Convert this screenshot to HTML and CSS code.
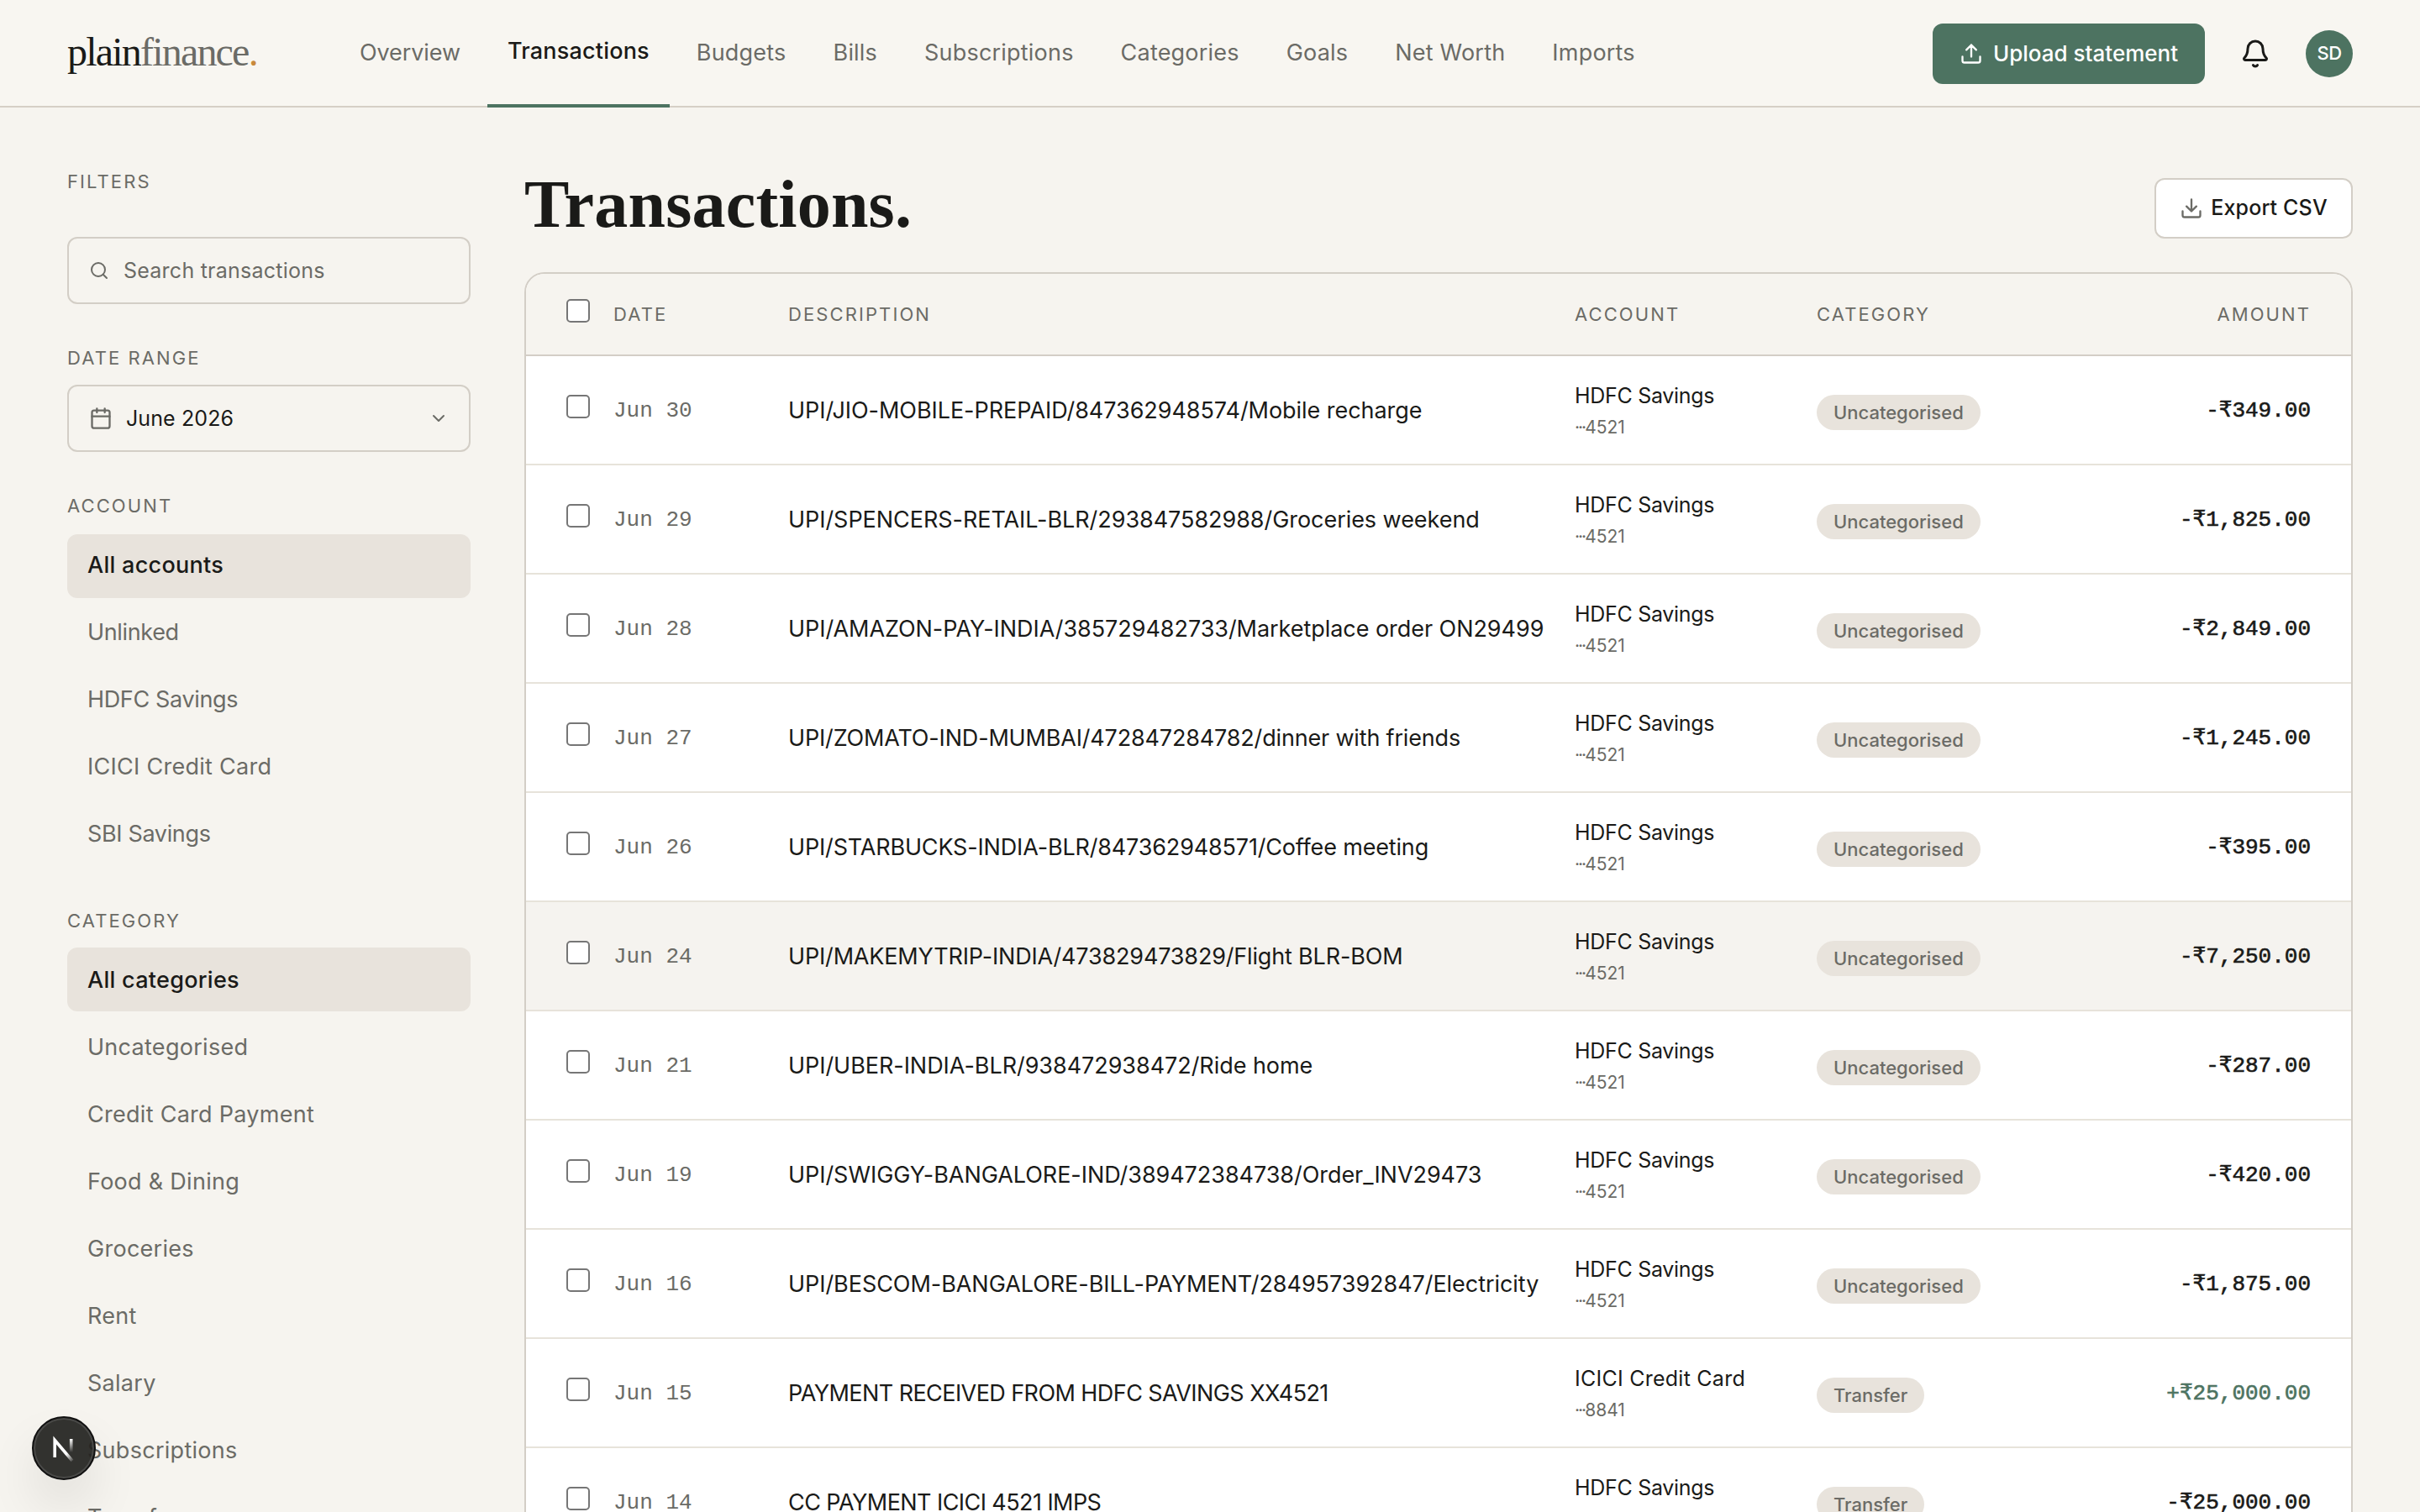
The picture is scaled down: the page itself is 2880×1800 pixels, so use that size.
FILE: index.html
```html
<!DOCTYPE html>
<html lang="en">
<head>
    <meta charset="UTF-8">
    <meta name="viewport" content="width=device-width, initial-scale=1.0">
    <title>plainfinance. - Transactions</title>
    <link rel="stylesheet" href="styles.css">
</head>
<body>
    <header class="topbar">
        <a class="logo">plain<span class="logo-soft">finance</span><span class="logo-dot">.</span></a>
        <nav class="nav">
            <a class="nav-link first">Overview</a>
            <a class="nav-link active">Transactions</a>
            <a class="nav-link">Budgets</a>
            <a class="nav-link">Bills</a>
            <a class="nav-link">Subscriptions</a>
            <a class="nav-link">Categories</a>
            <a class="nav-link">Goals</a>
            <a class="nav-link">Net Worth</a>
            <a class="nav-link">Imports</a>
        </nav>
        <div class="actions">
            <button class="upload">
                <svg class="icon-upload" viewBox="0 0 24 24"><path d="M21 15v4a2 2 0 0 1-2 2H5a2 2 0 0 1-2-2v-4M17 8l-5-5-5 5M12 3v12"/></svg>
                <span>Upload statement</span>
            </button>
            <button class="bell">
                <svg class="icon-bell" viewBox="0 0 24 24"><path d="M10.27 21a2 2 0 0 0 3.46 0M3.26 15.33A1 1 0 0 0 4 17h16a1 1 0 0 0 .74-1.67C19.41 13.96 18 12.5 18 8A6 6 0 0 0 6 8c0 4.5-1.41 5.96-2.74 7.33"/></svg>
            </button>
            <span class="avatar">SD</span>
        </div>
    </header>

    <div class="page">
        <aside class="sidebar">
            <h2 class="label label-filters">Filters</h2>
            <div class="field search">
                <svg class="icon-search" viewBox="0 0 24 24"><circle cx="11" cy="11" r="8"/><path d="m21 21-4.3-4.3"/></svg>
                <span>Search transactions</span>
            </div>

            <h2 class="label label-date">Date range</h2>
            <div class="field month">
                <svg class="icon-calendar" viewBox="0 0 24 24"><rect x="3" y="4" width="18" height="18" rx="2"/><path d="M8 2v4M16 2v4M3 10h18"/></svg>
                <span>June 2026</span>
                <svg class="icon-chevron" viewBox="0 0 24 24"><path d="m6 9 6 6 6-6"/></svg>
            </div>

            <h2 class="label label-account">Account</h2>
            <ul class="filter-list">
                <li class="selected">All accounts</li>
                <li class="tight">Unlinked</li>
                <li class="tight">HDFC Savings</li>
                <li>ICICI Credit Card</li>
                <li class="tight">SBI Savings</li>
            </ul>

            <h2 class="label label-category">Category</h2>
            <ul class="filter-list categories">
                <li class="selected">All categories</li>
                <li>Uncategorised</li>
                <li>Credit Card Payment</li>
                <li>Food &amp; Dining</li>
                <li>Groceries</li>
                <li>Rent</li>
                <li>Salary</li>
                <li>Subscriptions</li>
                <li>Transfer</li>
            </ul>
        </aside>

        <main class="main">
            <div class="heading">
                <h1>Transactions.</h1>
                <button class="export">
                    <svg class="icon-download" viewBox="0 0 24 24"><path d="M21 15v4a2 2 0 0 1-2 2H5a2 2 0 0 1-2-2v-4M7 10l5 5 5-5M12 15V3"/></svg>
                    <span>Export CSV</span>
                </button>
            </div>

            <div class="card">
                <table class="transactions">
                    <colgroup>
                        <col class="col-check"><col class="col-date"><col class="col-desc">
                        <col class="col-account"><col class="col-category"><col class="col-amount">
                    </colgroup>
                    <thead>
                        <tr>
                            <th class="check"><span class="box"></span></th>
                            <th>Date</th>
                            <th>Description</th>
                            <th>Account</th>
                            <th>Category</th>
                            <th class="right">Amount</th>
                        </tr>
                    </thead>
                    <tbody>
                        <tr>
                            <td class="check"><span class="box"></span></td>
                            <td class="date">Jun 30</td>
                            <td class="desc">UPI/JIO-MOBILE-PREPAID/847362948574/Mobile recharge</td>
                            <td class="account">HDFC Savings<small><i>···</i>4521</small></td>
                            <td class="category"><span class="pill">Uncategorised</span></td>
                            <td class="amount">-₹349.00</td>
                        </tr>
                        <tr>
                            <td class="check"><span class="box"></span></td>
                            <td class="date">Jun 29</td>
                            <td class="desc">UPI/SPENCERS-RETAIL-BLR/293847582988/Groceries weekend</td>
                            <td class="account">HDFC Savings<small><i>···</i>4521</small></td>
                            <td class="category"><span class="pill">Uncategorised</span></td>
                            <td class="amount">-₹1,825.00</td>
                        </tr>
                        <tr>
                            <td class="check"><span class="box"></span></td>
                            <td class="date">Jun 28</td>
                            <td class="desc">UPI/AMAZON-PAY-INDIA/385729482733/Marketplace order ON29499</td>
                            <td class="account">HDFC Savings<small><i>···</i>4521</small></td>
                            <td class="category"><span class="pill">Uncategorised</span></td>
                            <td class="amount">-₹2,849.00</td>
                        </tr>
                        <tr>
                            <td class="check"><span class="box"></span></td>
                            <td class="date">Jun 27</td>
                            <td class="desc snug">UPI/ZOMATO-IND-MUMBAI/472847284782/dinner with friends</td>
                            <td class="account">HDFC Savings<small><i>···</i>4521</small></td>
                            <td class="category"><span class="pill">Uncategorised</span></td>
                            <td class="amount">-₹1,245.00</td>
                        </tr>
                        <tr>
                            <td class="check"><span class="box"></span></td>
                            <td class="date">Jun 26</td>
                            <td class="desc snug">UPI/STARBUCKS-INDIA-BLR/847362948571/Coffee meeting</td>
                            <td class="account">HDFC Savings<small><i>···</i>4521</small></td>
                            <td class="category"><span class="pill">Uncategorised</span></td>
                            <td class="amount">-₹395.00</td>
                        </tr>
                        <tr class="hovered">
                            <td class="check"><span class="box"></span></td>
                            <td class="date">Jun 24</td>
                            <td class="desc snug">UPI/MAKEMYTRIP-INDIA/473829473829/Flight BLR-BOM</td>
                            <td class="account">HDFC Savings<small><i>···</i>4521</small></td>
                            <td class="category"><span class="pill">Uncategorised</span></td>
                            <td class="amount">-₹7,250.00</td>
                        </tr>
                        <tr>
                            <td class="check"><span class="box"></span></td>
                            <td class="date">Jun 21</td>
                            <td class="desc">UPI/UBER-INDIA-BLR/938472938472/Ride home</td>
                            <td class="account">HDFC Savings<small><i>···</i>4521</small></td>
                            <td class="category"><span class="pill">Uncategorised</span></td>
                            <td class="amount">-₹287.00</td>
                        </tr>
                        <tr>
                            <td class="check"><span class="box"></span></td>
                            <td class="date">Jun 19</td>
                            <td class="desc">UPI/SWIGGY-BANGALORE-IND/389472384738/Order_INV29473</td>
                            <td class="account">HDFC Savings<small><i>···</i>4521</small></td>
                            <td class="category"><span class="pill">Uncategorised</span></td>
                            <td class="amount">-₹420.00</td>
                        </tr>
                        <tr>
                            <td class="check"><span class="box"></span></td>
                            <td class="date">Jun 16</td>
                            <td class="desc">UPI/BESCOM-BANGALORE-BILL-PAYMENT/284957392847/Electricity</td>
                            <td class="account">HDFC Savings<small><i>···</i>4521</small></td>
                            <td class="category"><span class="pill">Uncategorised</span></td>
                            <td class="amount">-₹1,875.00</td>
                        </tr>
                        <tr>
                            <td class="check"><span class="box"></span></td>
                            <td class="date">Jun 15</td>
                            <td class="desc caps">PAYMENT RECEIVED FROM HDFC SAVINGS XX4521</td>
                            <td class="account credit-card">ICICI Credit Card<small><i>···</i>8841</small></td>
                            <td class="category"><span class="pill">Transfer</span></td>
                            <td class="amount credit">+₹25,000.00</td>
                        </tr>
                        <tr>
                            <td class="check"><span class="box"></span></td>
                            <td class="date">Jun 14</td>
                            <td class="desc caps">CC PAYMENT ICICI 4521 IMPS</td>
                            <td class="account">HDFC Savings<small><i>···</i>4521</small></td>
                            <td class="category"><span class="pill">Transfer</span></td>
                            <td class="amount">-₹25,000.00</td>
                        </tr>
                    </tbody>
                </table>
            </div>
        </main>
    </div>

    <div class="dev-badge">
        <svg viewBox="0 0 76 76">
            <defs>
                <linearGradient id="fade-a" gradientUnits="userSpaceOnUse" x1="38" y1="40" x2="50" y2="54">
                    <stop offset="0.3" stop-color="#fff"/><stop offset="1" stop-color="#fff" stop-opacity="0"/>
                </linearGradient>
                <linearGradient id="fade-b" gradientUnits="userSpaceOnUse" x1="47" y1="27" x2="47" y2="43">
                    <stop offset="0" stop-color="#fff"/><stop offset="1" stop-color="#fff" stop-opacity="0"/>
                </linearGradient>
            </defs>
            <path d="M27.2 49V28.5L48 53" stroke="url(#fade-a)"/>
            <path d="M46.7 27v16" stroke="url(#fade-b)"/>
        </svg>
    </div>
</body>
</html>
```

FILE: styles.css
```css
* {
    box-sizing: border-box;
}

body {
    margin: 0;
    height: 1800px;
    overflow: hidden;
    background: #f6f4ef;
    color: #1a1a18;
    font-family: Inter, 'Liberation Sans', sans-serif;
    font-size: 27px;
}

h1, h2, ul {
    margin: 0;
    padding: 0;
}

button {
    font: inherit;
    border: none;
    background: none;
    padding: 0;
}

svg {
    fill: none;
    stroke: currentColor;
    stroke-width: 2;
    stroke-linecap: round;
    stroke-linejoin: round;
    flex: none;
}

/* top bar */

.topbar {
    display: flex;
    height: 128px;
    padding: 0 80px;
    background: #f8f6f1;
    border-bottom: 2px solid #d6cfc6;
}

.logo {
    width: 324px;
    font-family: 'Liberation Serif', serif;
    font-size: 48px;
    line-height: 124px;
    letter-spacing: -1.8px;
}

.logo-soft {
    color: #6b6b66;
}

.logo-dot {
    color: #c98a3c;
}

.nav {
    display: flex;
    gap: 8px;
    height: 128px;
}

.nav-link {
    padding: 0 24px;
    line-height: 126px;
    letter-spacing: 0.2px;
    color: #6b6b66;
    white-space: nowrap;
}

.nav-link.first {
    letter-spacing: -0.1px;
}

.nav-link.active {
    color: #1a1a18;
    font-weight: 500;
    line-height: 122px;
    border-bottom: 4px solid #4d7361;
}

.actions {
    display: flex;
    align-items: center;
    margin-left: auto;
    height: 128px;
}

.upload {
    display: flex;
    align-items: center;
    justify-content: center;
    gap: 12px;
    width: 324px;
    height: 72px;
    border-radius: 12px;
    background: #4d7361;
    color: #fff;
    font-size: 26px;
    font-weight: 500;
}

.upload span, .export span {
    padding-bottom: 2px;
}

.icon-upload {
    width: 28px;
    height: 28px;
}

.bell {
    display: flex;
    justify-content: center;
    width: 80px;
    margin: 0 20px;
    color: #1a1a18;
}

.icon-bell {
    width: 36px;
    height: 36px;
}

.avatar {
    width: 56px;
    border-radius: 50%;
    background: #4d7361;
    color: #fff;
    font-size: 22px;
    font-weight: 500;
    line-height: 54px;
    letter-spacing: -0.6px;
    height: 56px;
    text-align: center;
}

/* layout */

.page {
    display: flex;
    gap: 64px;
    padding: 64px 80px 0;
}

/* sidebar */

.sidebar {
    width: 480px;
    flex: none;
}

.label {
    font-size: 22px;
    font-weight: 400;
    line-height: 33px;
    letter-spacing: 2.1px;
    text-transform: uppercase;
    color: #6b6b66;
}

.label-filters {
    padding-top: 8px;
    margin-bottom: 49px;
}

.label-date {
    margin: 48px 0 15px;
}

.label-account {
    margin: 48px 0 17px;
}

.label-category {
    margin: 48px 0 15px;
}

.field {
    display: flex;
    align-items: center;
    height: 80px;
    padding: 0 24px;
    border: 2px solid #d3cec6;
    border-radius: 12px;
    font-size: 25px;
    letter-spacing: 0.24px;
}

.search {
    gap: 17px;
    color: #6b6b66;
}

.icon-search {
    width: 24px;
    height: 24px;
}

.month {
    gap: 16px;
    letter-spacing: 0.1px;
}

.icon-calendar {
    width: 28px;
    height: 28px;
    color: #6b6b66;
}

.icon-chevron {
    width: 24px;
    height: 24px;
    margin-left: auto;
    color: #6b6b66;
}

.filter-list {
    display: flex;
    flex-direction: column;
    gap: 4px;
    list-style: none;
}

.filter-list li {
    height: 76px;
    padding-left: 24px;
    border-radius: 12px;
    line-height: 74px;
    letter-spacing: 0.28px;
    color: #6b6b66;
}

.filter-list .tight {
    letter-spacing: -0.35px;
}

.categories li {
    line-height: 77px;
}

.filter-list .selected {
    background: #e8e3dc;
    color: #1a1a18;
    font-weight: 500;
}

/* main column */

.main {
    flex: 1;
}

.heading {
    display: flex;
    justify-content: space-between;
    height: 132px;
    padding-top: 20px;
}

.heading h1 {
    font-family: 'Liberation Serif', serif;
    font-size: 80px;
    font-weight: 700;
    line-height: 62px;
    letter-spacing: 0.2px;
}

.export {
    display: flex;
    align-items: center;
    justify-content: center;
    gap: 9px;
    width: 236px;
    height: 72px;
    border: 2px solid #d3cec6;
    border-radius: 12px;
    background: #fff;
    color: #1a1a18;
    font-size: 25px;
    font-weight: 500;
    letter-spacing: 0.15px;
}

.icon-download {
    width: 28px;
    height: 28px;
    color: #6b6b66;
}

.card {
    border: 2px solid #d3cec6;
    border-radius: 24px 24px 0 0;
    background: #fff;
    overflow: hidden;
}

.transactions {
    width: 100%;
    table-layout: fixed;
    border-collapse: separate;
    border-spacing: 0;
}

.col-check { width: 104px; }
.col-date { width: 208px; }
.col-desc { width: 936px; }
.col-account { width: 288px; }
.col-category { width: 288px; }

.transactions th {
    height: 98px;
    padding: 0;
    border-bottom: 2px solid #d3cec6;
    background: #f6f4ef;
    font-size: 22px;
    font-weight: 400;
    letter-spacing: 2.1px;
    text-align: left;
    text-transform: uppercase;
    color: #6b6b66;
}

.transactions td {
    height: 130px;
    padding: 0;
    border-bottom: 2px solid #e7e3da;
    white-space: nowrap;
}

.transactions .hovered td {
    background: #f5f3ef;
}

.transactions .check {
    padding: 0 0 8px 48px;
}

.box {
    display: block;
    width: 28px;
    height: 28px;
    border: 2px solid #767676;
    border-radius: 5px;
    background: #fff;
}

.transactions .right {
    text-align: right;
    padding-right: 48px;
}

.transactions .date {
    padding-top: 2px;
    font-family: 'Liberation Mono', monospace;
    font-size: 26px;
    color: #6b6b66;
}

.desc {
    letter-spacing: -0.05px;
}

.desc.snug {
    letter-spacing: -0.17px;
}

.desc.caps {
    letter-spacing: -0.57px;
}

.account {
    font-size: 25px;
    line-height: 42px;
    letter-spacing: -0.3px;
}

.account.credit-card {
    letter-spacing: 0.25px;
}

.account small {
    display: block;
    font-size: 21px;
    line-height: 34px;
    letter-spacing: 0;
    color: #6b6b66;
}

.account small i {
    font-style: normal;
    letter-spacing: -2px;
}

.transactions .category {
    padding-top: 6px;
}

.pill {
    display: block;
    width: fit-content;
    height: 42px;
    padding: 0 20px;
    border-radius: 21px;
    background: #e8e3dc;
    color: #6b6b66;
    font-size: 22px;
    font-weight: 500;
    line-height: 42px;
}

.transactions .amount {
    padding: 0 48px 0 0;
    font-family: 'Liberation Mono', monospace;
    font-size: 26px;
    text-align: right;
    -webkit-text-stroke: 0.6px currentColor;
}

.transactions .credit {
    color: #4d7361;
}

/* round dev tools button, floats over the sidebar */

.dev-badge {
    position: absolute;
    left: 38px;
    top: 1686px;
    width: 76px;
    height: 76px;
    border: 2px solid #111;
    border-radius: 50%;
    background: rgba(34, 34, 32, 0.93);
    box-shadow: inset 0 0 0 2px #4a4a48, 0 32px 64px -8px rgba(0, 0, 0, 0.14);
}

.dev-badge svg {
    display: block;
    width: 76px;
    height: 76px;
    margin: -2px;
    stroke-width: 3.6;
    stroke-linecap: butt;
    stroke-linejoin: miter;
}
```
